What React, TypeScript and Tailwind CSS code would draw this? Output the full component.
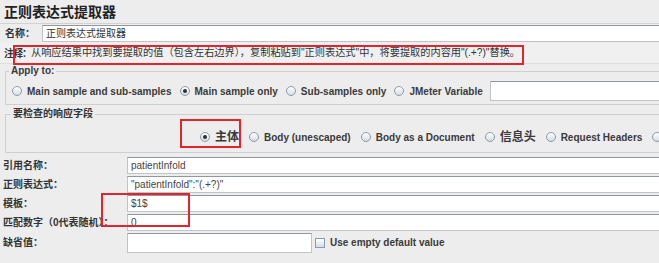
import React from 'react'

const font = "font-['Liberation_Sans','Noto_Sans_CJK_SC',sans-serif]"

function Radio({ on }: { on?: boolean }) {
  return (
    <span className="inline-flex h-[10px] w-[10px] shrink-0 items-center justify-center rounded-full border border-[#8a9bab] bg-gradient-to-b from-[#ffffff] to-[#d5dde5]">
      {on && <span className="h-[4px] w-[4px] rounded-full bg-[#2f2f2f]" />}
    </span>
  )
}

function Option({ label, on, cjk }: { label: string; on?: boolean; cjk?: boolean }) {
  return (
    <span className="flex shrink-0 items-center gap-[5px]">
      <Radio on={on} />
      <span className={`whitespace-nowrap font-bold text-[#3a3a3a] ${cjk ? 'text-[12px]' : 'text-[10px]'}`}>{label}</span>
    </span>
  )
}

function Field({ label, value, short }: { label: string; value?: string; short?: boolean }) {
  return (
    <div className={`flex items-center ${short ? 'h-[21px]' : 'h-[19px]'}`}>
      <span className="w-[127px] shrink-0 whitespace-nowrap pl-[3px] text-[10px] font-bold text-[#333]">{label}</span>
      <div
        className={`flex items-center border border-[#c0c4c8] border-t-[#8f979f] bg-white pl-[3px] text-[10px] text-[#444] ${
          short ? 'h-[20px] w-[185px]' : 'h-[17px] flex-1'
        }`}
      >
        {value}
      </div>
      {short && (
        <div className="ml-[3px] flex items-center gap-[5px]">
          <span className="h-[10px] w-[10px] border border-[#8a9bab] bg-gradient-to-b from-[#ffffff] to-[#d5dde5]" />
          <span className="whitespace-nowrap text-[10px] font-bold text-[#3a3a3a]">Use empty default value</span>
        </div>
      )}
    </div>
  )
}

export default function App() {
  return (
    <div className={`relative h-[263px] w-[659px] overflow-hidden bg-[#ededed] ${font}`}>
      <div className="w-[672px]">
        {/* title */}
        <div className="h-[24px] border-b border-[#d2d2d2] pl-[4px] text-[14px] font-bold leading-[24px] text-[#222]">
          正则表达式提取器
        </div>

        {/* name */}
        <div className="flex h-[19px] items-center">
          <span className="w-[42px] shrink-0 whitespace-nowrap pl-[5px] text-[10px] font-bold text-[#333]">名称：</span>
          <div className="flex h-[17px] flex-1 items-center border border-[#c0c4c8] border-t-[#8f979f] bg-white pl-[3px] text-[10px] text-[#333]">
            正则表达式提取器
          </div>
        </div>

        {/* comment */}
        <div className="flex h-[21px] items-center border-b border-[#dedede] bg-[#f0f0f0]">
          <span className="shrink-0 whitespace-nowrap pl-[4px] text-[10px] font-bold tracking-[-1px] text-[#333]">注释：</span>
          <span className="whitespace-nowrap text-[10.2px] text-[#333]">
            从响应结果中找到要提取的值（包含左右边界），复制粘贴到"正则表达式"中，将要提取的内容用"(.+?)"替换。
          </span>
        </div>

        {/* apply to */}
        <fieldset className="mt-[1px] ml-[5px] border border-[#cfcfcf] pb-[3px]">
          <legend className="ml-[3px] px-[2px] text-[10px] font-bold leading-[12px] text-[#3a3a3a]">Apply to:</legend>
          <div className="flex items-center gap-[8px] pt-[4px] pl-[6px]">
            <Option label="Main sample and sub-samples" />
            <Option label="Main sample only" on />
            <Option label="Sub-samples only" />
            <Option label="JMeter Variable" />
            <div className="-ml-[1px] h-[20px] flex-1 border border-[#c0c4c8] border-t-[#8f979f] bg-white" />
          </div>
        </fieldset>

        {/* field to check */}
        <fieldset className="mt-[3px] ml-[5px] border border-[#cfcfcf] pb-[5px]">
          <legend className="ml-[5px] px-[2px] text-[10px] font-bold leading-[12px] text-[#333]">要检查的响应字段</legend>
          <div className="flex h-[27px] items-center gap-[10px] pt-[7px] pl-[194px]">
            <Option label="主体" on cjk />
            <Option label="Body (unescaped)" />
            <Option label="Body as a Document" />
            <Option label="信息头" cjk />
            <Option label="Request Headers" />
            <Option label="URL" />
          </div>
        </fieldset>

        <div className="mt-[3px]">
          <Field label="引用名称：" value="patientInfold" />
          <Field label="正则表达式：" value={'"patientInfold":"(.+?)"'} />
          <Field label="模板：" value="$1$" />
          <Field label="匹配数字（0代表随机）：" value="0" />
          <Field label="缺省值：" short />
        </div>
      </div>

      {/* annotation boxes */}
      <div className="absolute left-[13px] top-[45px] h-[20px] w-[511px] border-2 border-[#e0262c]" />
      <div className="absolute left-[180px] top-[119px] h-[29px] w-[61px] border-2 border-[#e0262c]" />
      <div className="absolute left-[101px] top-[193px] h-[34px] w-[89px] border-2 border-[#e0262c]" />
    </div>
  )
}
